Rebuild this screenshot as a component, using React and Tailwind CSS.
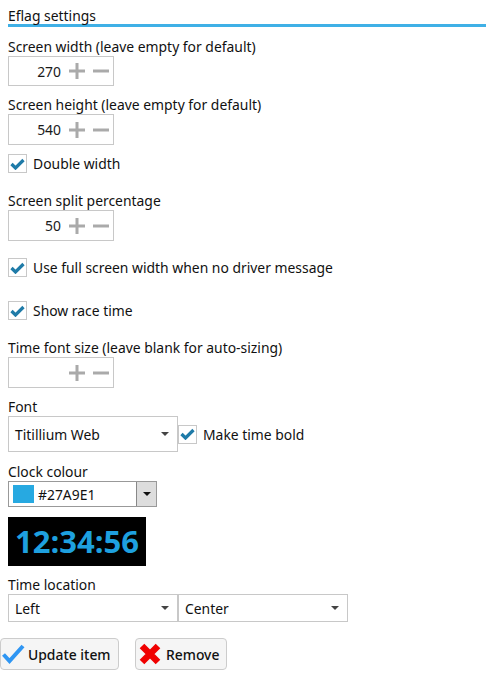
import React from 'react';

function Spinner({ value, className = 'h-[31px]' }) {
  return (
    <div className={`flex w-[106px] items-center border border-[#c8c8c8] bg-white ${className}`}>
      <span className="w-[52px] text-right text-[#1a1a1a]">{value}</span>
      <svg className="ml-2" width="16" height="16" viewBox="0 0 16 16">
        <path d="M0 8h16M8 0v16" stroke="#aaaaaa" strokeWidth="3" />
      </svg>
      <svg className="ml-2" width="16" height="16" viewBox="0 0 16 16">
        <path d="M0 8h16" stroke="#aaaaaa" strokeWidth="3" />
      </svg>
    </div>
  );
}

function Check({ label }) {
  return (
    <div className="flex items-center">
      <div className="flex h-[19px] w-[19px] items-center justify-center border border-[#c8c8c8] bg-white">
        <svg width="15" height="12" viewBox="0 0 15 12">
          <path d="M1.5 6l4 4 8-8" fill="none" stroke="#1f7ba8" strokeWidth="3.2" />
        </svg>
      </div>
      <span className="ml-[6px] text-[#111111]">{label}</span>
    </div>
  );
}

function Select({ label, className }) {
  return (
    <div className={`flex items-center justify-between border border-[#c8c8c8] bg-white pl-[6px] pr-2 ${className}`}>
      <span className="text-[#111111]">{label}</span>
      <div className="h-0 w-0 border-x-[4px] border-t-[4px] border-x-transparent border-t-[#444444]" />
    </div>
  );
}

export default function App() {
  return (
    <div className="min-h-screen bg-white pl-2 pr-[11px] text-[13.9px] leading-[19px] text-[#111111] font-['Noto_Sans',sans-serif]">
      {/* Title */}
      <div className="h-[27px] border-b-[3px] border-[#3fb0e6] pt-[6px]">Eflag settings</div>

      <div className="mt-[10px]">Screen width (leave empty for default)</div>
      <Spinner value="270" className="h-[30px]" />

      <div className="mt-[9px]">Screen height (leave empty for default)</div>
      <Spinner value="540" />

      <div className="mt-[9px]"><Check label="Double width" /></div>

      <div className="mt-[18px]">Screen split percentage</div>
      <Spinner value="50" />

      <div className="mt-[17px]"><Check label="Use full screen width when no driver message" /></div>
      <div className="mt-[24px]"><Check label="Show race time" /></div>

      <div className="mt-[18px]">Time font size (leave blank for auto-sizing)</div>
      <Spinner value="" />

      <div className="mt-[9px]">Font</div>
      <div className="flex items-center">
        <Select label="Titillium Web" className="h-[36px] w-[170px]" />
        <Check label="Make time bold" />
      </div>

      <div className="mt-[10px]">Clock colour</div>
      <div className="flex h-[26px] w-[149px] items-center border border-[#999999] bg-white">
        <div className="ml-1 h-[18px] w-[21px] bg-[#27a9e1]" />
        <span className="ml-[4px] flex-1">#27A9E1</span>
        <div className="flex h-full w-5 items-center justify-center border-l border-[#888888] bg-[#dddddd]">
          <div className="h-0 w-0 border-x-[4px] border-t-[4px] border-x-transparent border-t-[#111111]" />
        </div>
      </div>

      <div className="mt-[10px] flex h-[49px] w-[138px] items-center justify-center bg-black text-[31px] font-bold leading-none text-[#1ea0df] font-['Open_Sans',sans-serif]">
        12:34:56
      </div>

      <div className="mt-[9px]">Time location</div>
      <div className="flex">
        <Select label="Left" className="h-[28px] w-[170px]" />
        <Select label="Center" className="h-[28px] w-[170px]" />
      </div>

      <div className="mt-4 -ml-2 flex gap-4">
        <button className="flex h-8 w-[119px] items-center rounded border border-[#cccccc] bg-[#f5f5f5]">
          <svg width="24" height="20" viewBox="0 0 24 20">
            <path d="M2.5 10.5l6 6.5L22 2" fill="none" stroke="#2f96f3" strokeWidth="4" />
          </svg>
          <span className="ml-[3px] font-medium">Update item</span>
        </button>
        <button className="flex h-8 w-[92px] items-center rounded border border-[#cccccc] bg-[#f5f5f5] pl-[3px]">
          <svg width="22" height="22" viewBox="0 0 22 22">
            <path d="M3 3l16 16M19 3L3 19" stroke="#f00000" strokeWidth="6.5" />
          </svg>
          <span className="ml-[5px] font-medium">Remove</span>
        </button>
      </div>
    </div>
  );
}
